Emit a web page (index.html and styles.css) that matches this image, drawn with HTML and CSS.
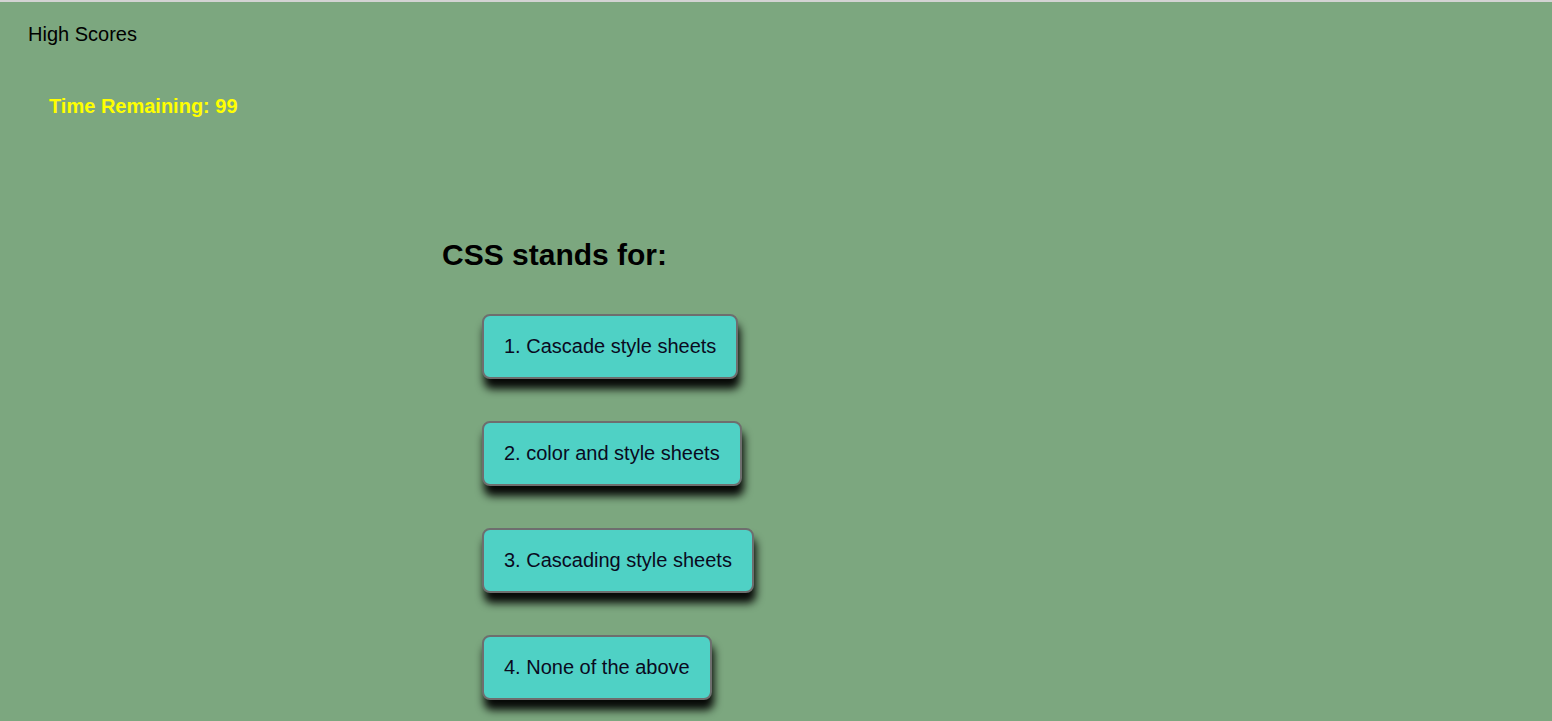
FILE: index.html
```html
<!DOCTYPE html>
<html>
<head>
<meta charset="utf-8">
<link rel="stylesheet" href="styles.css">
</head>
<body>
<div class="topline"></div>
<div class="page">
  <header class="header">
    <a class="scores">High Scores</a>
  </header>
  <div class="timer">Time Remaining: 99</div>
  <main class="quiz">
    <h2 class="question">CSS stands for:</h2>
    <div class="choices">
      <button class="choice">1. Cascade style sheets</button>
      <button class="choice">2. color and style sheets</button>
      <button class="choice">3. Cascading style sheets</button>
      <button class="choice">4. None of the above</button>
    </div>
  </main>
</div>
</body>
</html>
```
FILE: styles.css
```css
html, body {
  margin: 0;
  padding: 0;
  height: 100%;
}
body {
  background: #7ca77f;
  font-family: "Liberation Sans", Arial, sans-serif;
  color: #000;
  overflow: hidden;
}
.topline {
  height: 2px;
  background: #d3d3d3;
}
.page {
  background: #7ca77f;
}
.header {
  padding: 21px 28px 0;
  height: 24px;
}
.scores {
  font-size: 20px;
  line-height: 23px;
}
.timer {
  margin: 48px 0 0 49px;
  color: #ffff00;
  font-weight: bold;
  font-size: 20px;
  line-height: 23px;
}
.quiz {
  margin: 120px 0 0 442px;
}
.question {
  margin: 0;
  font-size: 30px;
  line-height: 34px;
  font-weight: bold;
}
.choices {
  display: flex;
  flex-direction: column;
  align-items: flex-start;
  gap: 42px;
  margin: 42px 0 0 40px;
}
.choice {
  font-family: "Liberation Sans", Arial, sans-serif;
  font-size: 20px;
  line-height: 23px;
  padding: 19px 20px;
  background: #4fd1c5;
  color: #0a0a1e;
  border: 2px solid #6e6e6e;
  border-radius: 8px;
  box-shadow: 2px 10px 8px rgba(0, 0, 0, 0.95);
}
```
